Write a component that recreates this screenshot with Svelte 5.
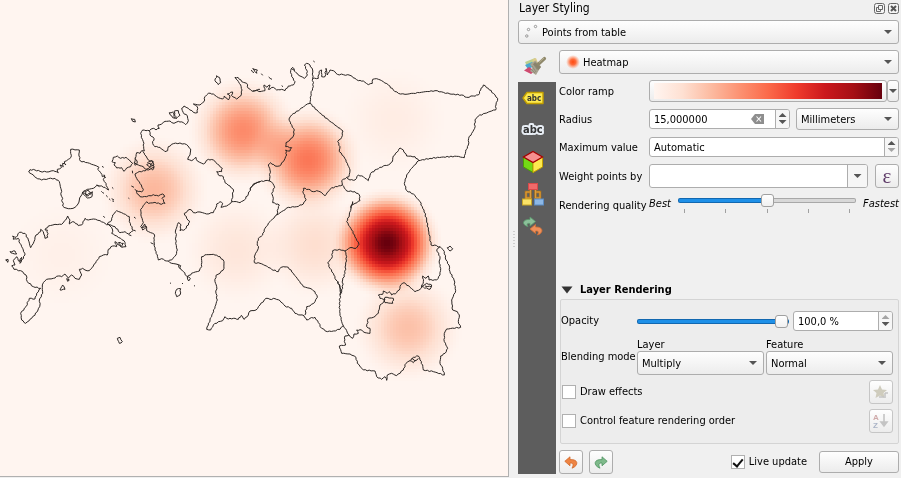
<script>
  const RAMP = [
    [255, 245, 240], [254, 224, 210], [252, 187, 161], [252, 146, 114], [251, 106, 74],
    [239, 59, 44], [203, 24, 29], [165, 15, 21], [103, 0, 13]
  ];
  const RADIUS = 57;
  const CELL = 3;
  const heat = [
    [387, 243, 1], [243, 131, 0.4], [308, 160, 0.46], [154, 190, 0.26], [408, 328, 0.23],
    [237, 250, 0.09], [315, 245, 0.13], [394, 120, 0.05], [62, 255, 0.03]
  ];

  function rampColor(v) {
    const t = Math.min(1, v) * 8;
    const i = Math.min(7, Math.floor(t));
    const c = RAMP[i].map((a, k) => Math.round(a + (RAMP[i + 1][k] - a) * (t - i)));
    return `rgb(${c.join(',')})`;
  }

  function drawHeat(canvas) {
    const ctx = canvas.getContext('2d');
    for (let y = 0; y < canvas.height; y += CELL) {
      for (let x = 0; x < canvas.width; x += CELL) {
        let sum = 0;
        for (const [px, py, w] of heat) {
          const q = ((x + 1.5 - px) ** 2 + (y + 1.5 - py) ** 2) / RADIUS ** 2;
          if (q < 1) sum += w * (1 - q) ** 2;
        }
        ctx.fillStyle = rampColor(sum);
        ctx.fillRect(x, y, CELL, CELL);
      }
    }
  }

  // Boundaries are digitised on four map sheets, three units to a pixel.
  const sheets = [
    { x: 0, y: 50, lines: [
      '212,298 238,300 237,318 241,333 262,338 275,343 290,348 297,352 293,358 302,368 307,380 314,377 310,388 318,400 322,412 326,420 315,412 300,408 290,406 280,415 262,418 248,426 243,438 238,450 234,462 225,472 212,476 198,474 188,468 190,460 185,452 188,445 183,435 185,425 181,410 178,395 165,385 145,386 125,390 108,383 95,372 86,366 90,359 105,360 120,364 140,366 160,362 175,368 172,358 185,352 180,345 190,350 188,340 198,345 193,335 205,328 213,322 212,310 z',
      '248,428 262,434 277,425 276,440 262,444 254,436 z', '254,424 264,420 274,432 260,438 z',
      '340,322 352,318 362,325 378,322 388,330 398,340 392,350 380,354 372,364 365,353 350,354 342,345 346,338 336,335 z',
      '394,206 404,208 406,216 398,214 z', '650,77 658,82 662,98 655,104 645,92 z',
      '508,188 518,186 526,205 518,203 510,194 z', '522,184 535,182 540,196 528,206 z',
      '448,242 438,242 428,240 422,250 424,262 430,275 431,290 433,303 425,302 420,310 410,308 406,325 404,338 415,345 430,350 438,358 450,352 458,360 462,348 450,345 460,335 445,330 438,318 428,305',
      '442,338 456,332 462,345 448,350 440,344 452,340', '404,325 412,336 406,346 403,336',
      '462,352 445,360 430,362 412,368 405,372 410,385 418,395 424,405 430,418 425,426 410,422 412,432 420,440 440,440 460,434 475,438 488,432 494,440 486,445 495,460 480,462 465,457 445,460 440,455 430,466 422,478',
      '448,242 450,255 462,265 458,280 465,290 480,292 495,305 503,302 505,290 520,281 540,279 560,284 572,297 570,315 563,328 575,332 588,322 592,333 610,342 625,328 640,330 652,342 667,355 665,365 650,365 655,375 670,380 675,398 690,408 700,418 698,435 695,455 710,455 720,458 733,450 745,432 755,410 770,397 780,395',
      '648,472 650,462 660,455 668,460 663,472 680,468 692,460 695,455',
      '448,242 460,235 468,240 478,235 474,225 485,222 495,214 510,213 522,220 535,214 550,218 557,224 565,212 562,198 550,188 545,175 552,168 565,175 580,187 592,188 592,170 580,162 600,165 612,155 615,140 625,130 640,132 655,143 668,147 673,138 685,150 690,138 682,132 698,126 694,136 710,147 722,138 726,120 722,105 712,90 705,82 714,82 718,88 730,97 740,100 745,115 758,124 780,118',
      '394,408 402,412', '404,418 410,422', '304,424 312,430', '318,436 323,441', '327,446 331,450', '337,453 342,454', '336,412 340,416', '306,349 311,352', '385,444 388,446', '397,362 398,370', '312,374 317,384', '290,405 298,410'
    ] },
    { x: 0, y: 200, lines: [
      '203,48 210,60 208,72 218,65 232,72 235,77 245,75 255,55 265,60 280,57 300,62 315,70 330,78 338,90 335,100 350,108 362,115 372,122 378,140 365,142 370,130 355,128 362,140 345,125 350,140 338,138 325,148 322,165 310,165 298,170 292,180 280,198 268,212 255,210 248,205 238,208 245,225 238,238 225,235 215,225 205,235 195,222 185,230 175,228 160,235 140,238 130,248 127,262 128,280 118,300 120,315 112,335 95,355 77,370 65,360 62,340 78,320 88,295 105,297 110,280 122,265 100,260 82,245 78,225 62,212 42,208 35,198 45,195 40,182 50,170 58,185 65,172 60,190 75,165 68,145 60,130 55,115 40,118 38,108 48,112 58,97 75,100 85,120 92,143 102,125 108,105 122,95 122,88 130,95 135,115 143,112 142,90 135,90 145,78 165,73 185,73 197,60 z',
      '350,32 365,38 388,50 388,65 400,92 385,102 375,95 360,98 345,80 322,72 335,60 338,45 z',
      '30,155 45,153 50,162 38,160 z', '17,180 24,178 23,187 z', '188,255 195,268 180,270 z', '200,236 208,240 203,244 z',
      '530,268 542,266 540,285 530,290 526,280 z', '352,415 360,412 367,425 358,430 z',
      '310,48 314,53', '402,51 407,55', '401,90 407,93', '386,104 394,107', '546,250 549,251', '582,257 585,258', '510,249 513,250', '335,-4 342,0',
      '422,28 424,50 430,68 422,80 428,90 440,82 434,72 426,82 438,78 440,92 452,98 463,103 462,125 465,150 472,165 475,180 485,176 495,182 505,183 515,190 528,192 542,197 541,207 550,215 560,228 571,236 566,243 562,230 580,218 598,213 605,200 605,170 620,164 640,163 660,170 672,185 672,205 660,220 648,226 645,245 650,260 648,280 652,300 645,320 638,340 630,360 625,375 620,388 632,390 640,375 655,365 668,362 675,350 685,357 700,355 715,358 724,346 733,358 745,345 750,333',
      '452,128 461,132', '532,192 540,206',
      '505,183 515,180 528,165 532,150 527,130 528,110 527,90 535,68 543,75 540,92 555,88 570,65 560,55 553,40 570,28 580,38 600,36 620,42 640,38 648,22'
    ] },
    { x: 250, y: 50, lines: [
      '8,123 20,120 30,125 45,122 42,105 50,112 60,105 55,118 70,112 80,120 95,118 105,122 115,108 130,105 135,95 125,80 122,62 128,52 138,68 150,78 163,85 172,75 170,60 163,45 170,40 180,45 188,60 188,85 205,85 207,65 215,60 215,80 225,80 228,55 232,75 240,60 250,62 262,73 280,74 300,76 315,85 325,92 340,93 355,104 367,100 368,88 380,86 395,92 415,105 430,120 445,130 465,133 490,130 520,126 555,122 580,127 600,132 635,135 650,142 670,138 685,135 692,120 700,105 715,115 730,130 743,145 738,165 737,180 725,183 705,190 685,198 675,210 674,235 665,250 656,265 655,285 647,305 643,323 620,319 580,321 540,325 506,332',
      '506,332 495,320 470,318 460,300 450,294 445,302 430,318 427,335 415,345 400,348 380,358 362,370 355,392 340,380 325,375 315,390 300,390 290,382',
      '188,85 190,110 183,130 180,160 172,162 150,178 125,195 117,207 122,222 133,240 130,258 120,270 108,278 107,290 125,293 120,303 107,300 110,315 100,335 88,348 75,348 62,338 55,345 60,360 60,380 58,393 68,400 74,412 65,430 70,445 68,458 88,465 85,475 80,495',
      '30,395 45,392 58,393', '0,418 10,402 30,395',
      '180,160 205,185 235,210 260,228 279,243 275,262 263,275 270,290 268,305 282,320 292,340 300,360 297,380 290,382 275,392 277,405 262,410 245,413 235,425 225,437 210,425 200,422 190,425 175,418 160,415 160,430 168,448 160,462 140,470 115,472 100,482 80,495',
      '277,405 290,423 315,425 328,435 330,452 315,460 303,468 303,475',
      '506,332 485,355 470,375 463,400 470,422 490,432 510,455 518,475 522,480',
      '8,56 22,60 20,70 14,64 z', '34,71 38,76', '56,81 66,88', '190,33 194,36', '95,107 99,110', '4,60 12,68', '124,54 132,60'
    ] },
    { x: 250, y: 200, lines: [
      '80,45 60,65 45,85 38,105 25,115 22,130 25,145 15,165 13,188 30,190 50,198 65,208 85,215 88,207 100,200 115,202 130,220 145,240 160,260 180,265 195,275 202,292 195,305 180,318 170,320 165,345',
      '0,333 18,330 30,315 48,295 60,298 75,296 90,302 105,318 125,325 135,340 150,345 162,347 170,360 180,355 195,352 205,368 215,385 232,395 250,393 270,388 280,377',
      '303,25 298,45 290,65 305,90 318,115 327,133 318,145 300,143 285,153 268,148 248,152 245,175 233,188 240,205 250,220 258,240 268,255 272,280 268,310 270,340 275,365 280,377 290,392 297,405',
      '285,153 290,170 287,195 285,220 278,240 278,265 270,285', '264,244 270,262 275,280',
      '297,405 308,415 312,402 325,400 320,390 335,390 345,398 360,400 360,385 350,380 355,355 370,352 385,340 390,315 400,308 405,298 390,295 385,285 398,283 400,273 412,280 417,275 425,285 440,278 450,265 452,255 462,248 480,262 495,275 510,268 515,260 520,245 518,228 528,235 535,228 537,240 560,240 570,225 572,205 568,190 570,170 560,150 570,140',
      '402,300 405,292 430,295 428,310 405,308 z', '514,260 530,250 545,255 540,268 z', '525,258 545,260',
      '297,405 285,408 283,425 287,435 268,438 275,460 300,462 318,472 322,490 340,510 375,513 380,530 395,538 405,530 410,541 412,525 425,520 440,527 460,510 468,490 480,482 490,472 505,468 510,480 518,495 520,510 550,515 583,525 578,505 570,490 572,468 585,460 593,445 583,425 583,400 590,387 632,382 625,365 628,345 622,335 608,330 605,300 617,272 612,240 600,215 597,195 588,180 583,155 575,145 560,137 543,135',
      '480,482 490,488 505,475', '484,476 498,482',
      '522,30 530,60 535,90 540,115 543,135', '303,25 308,5 303,18', '592,143 600,138 608,146 600,153 z'
    ] }
  ];

  // Adds a small wiggle between vertices so shores do not look ruled.
  function toPath(line) {
    const parts = line.split(' ');
    const closed = parts.at(-1) === 'z';
    const pts = parts.filter((p) => p !== 'z').map((p) => p.split(',').map(Number));
    if (closed) pts.push(pts[0]);
    let d = `M${pts[0]}`;
    for (let i = 1; i < pts.length; i++) {
      const [ax, ay] = pts[i - 1];
      const [bx, by] = pts[i];
      const len = Math.hypot(bx - ax, by - ay);
      const n = Math.max(1, Math.round(len / 6));
      for (let k = 1; k < n; k++) {
        const j = Math.sin((ax + by) * 12.9 + k * 78.2) * 1.5;
        const x = ax + ((bx - ax) * k) / n - ((by - ay) / len) * j;
        const y = ay + ((by - ay) * k) / n + ((bx - ax) / len) * j;
        d += `L${x.toFixed(1)},${y.toFixed(1)}`;
      }
      d += `L${bx},${by}`;
    }
    return d;
  }

  let radius = $state('15,000000');
  let maximum = $state('Automatic');
  let weight = $state('');
  let quality = $state(50);
  let opacity = $state(100);
  let opacityText = $state('100,0 %');
  let live = $state(true);
</script>

{#snippet steps(name, upOff, downOff)}
  <span class="steps">
    <button aria-label="Increase {name}" disabled={upOff}><i class="up"></i></button>
    <button aria-label="Decrease {name}" disabled={downOff}><i class="down"></i></button>
  </span>
{/snippet}

<div class="app">
  <main class="map">
    <canvas width="508" height="476" use:drawHeat></canvas>
    <svg viewBox="0 0 508 476" role="img" aria-label="Heatmap over county boundaries">
      {#each sheets as s}
        <g transform="translate({s.x} {s.y}) scale(0.33333)">
          {#each s.lines as l}<path d={toPath(l)} />{/each}
        </g>
      {/each}
    </svg>
  </main>

  <div class="grip"><svg width="2" height="16" aria-hidden="true"><path d="M1 0V16" stroke="#aaa" stroke-dasharray="1 2" /></svg></div>

  <aside class="panel">
    <header>
      <h1>Layer Styling</h1>
      <button class="win" aria-label="Float panel">
        <svg width="11" height="11" viewBox="0 0 11 11"><rect x=".5" y=".5" width="10" height="10" rx="2" fill="#f4f4f4" stroke="#666" /><path d="M4.500 2.500H8.500V6.500H4.500ZM4.500 4.500H2.500V8.500H6.500V6.500" fill="none" stroke="#666" /></svg>
      </button>
      <button class="win" aria-label="Close panel">
        <svg width="11" height="11" viewBox="0 0 11 11"><rect x=".5" y=".5" width="10" height="10" rx="2" fill="#f4f4f4" stroke="#666" /><path d="M3 3L8 8M8 3L3 8" stroke="#555" stroke-width="2" /></svg>
      </button>
    </header>

    <div class="combo layer">
      <svg class="lead" width="14" height="14" viewBox="0 0 14 14" aria-hidden="true"><g fill="#fff" stroke="#8a8a8a" stroke-width=".9"><circle cx="3.500" cy="5.500" r="1.200" /><circle cx="10.500" cy="2.500" r="1.200" /><circle cx="1.800" cy="12" r="1.200" /></g></svg>
      <select aria-label="Layer"><option>Points from table</option></select>
    </div>

    <div class="body">
      <nav>
        <button class="tab current" aria-label="Symbology">
          <svg width="24" height="20" viewBox="0 0 24 20"><path d="M2 6L12 2L15 9L5 12Z" fill="#bccf8e" /><path d="M2 9L9 6L12 10L5 13Z" fill="#4aa8d0" /><path d="M9 3.500L13 2L15 7L11 8Z" fill="#dccb8a" /><path d="M1 14.500L6 11L12 15L8 18Z" fill="#cf4a70" /><path d="M7 8L12.500 4.500L18 10.500L13 19L7 15L9.500 12Z" fill="#a8a391" /><path d="M12 6L18 11L15.500 14L10 8.500Z" fill="#89836c" /><path d="M15.500 8L21.500 2.500" stroke="#8f886b" stroke-width="3.200" stroke-linecap="round" /><path d="M16 6.500L21 2" stroke="#b8b18f" stroke-width="1" /><path d="M9 10L13 16M11.500 9.500L14.500 14M8 13L12 17" stroke="#8b8672" stroke-width=".8" /></svg>
        </button>
        <button class="tab" aria-label="Labels">
          <svg width="22" height="14" viewBox="0 0 22 14"><path d="M1 7L5 1.500H21V12.500H5Z" fill="#fce94f" stroke="#c4a000" stroke-width="1.400" stroke-linejoin="round" /><text x="5" y="10" class="tag">abc</text></svg>
        </button>
        <button class="tab" aria-label="Masks">
          <svg width="24" height="18" viewBox="0 0 24 18"><text x="2" y="12" class="mask">abc</text></svg>
        </button>
        <button class="tab" aria-label="3D view">
          <svg width="22" height="24" viewBox="0 0 22 24"><path d="M1.500 7L11 12.500V22.500L1.500 17Z" fill="#73d916" stroke="#4e9a06" /><path d="M20.500 7L11 12.500V22.500L20.500 17Z" fill="#fce94f" stroke="#c4a000" /><path d="M11 1.500L20.500 7L11 12.500L1.500 7Z" fill="#f58f8f" stroke="#a40000" stroke-width="1.300" /></svg>
        </button>
        <button class="tab" aria-label="Diagrams">
          <svg width="24" height="24" viewBox="0 0 24 24"><path d="M9.500 7V16H5M14.500 7V16H19M5 18V10H9.500M19 18V10H14.500" fill="none" stroke="#b87a1a" stroke-width="2.400" /><path d="M9.500 7V16H5M14.500 7V16H19M5 18V10H9.500M19 18V10H14.500" fill="none" stroke="#e3a548" stroke-width=".8" /><rect x="7.500" y="1.500" width="9" height="6" fill="#f06a6a" stroke="#d84a4a" /><rect x="1.500" y="17" width="9" height="6" fill="#fbe368" stroke="#c9a727" /><rect x="13.500" y="17" width="9" height="6" fill="#8db8e6" stroke="#5b8cc4" /></svg>
        </button>
        <button class="tab" aria-label="History">
          <svg width="22" height="20" viewBox="0 0 22 20"><path d="M8 1L13.500 5.500L8 10V7.500C5 7 4.500 8 6 10.500C-.5 9 0 3 8 3.500Z" fill="#8cc09a" stroke="#5a9a6c" stroke-width=".8" /><path d="M13.500 8.500L8 13L13.500 17.500V15C16.500 14.800 17 16 15.500 19C22 17 21.500 10.500 13.500 11Z" fill="#ee8f5a" stroke="#d07035" stroke-width=".8" /></svg>
        </button>
      </nav>

      <section class="content">
        <div class="combo">
          <svg class="lead" width="16" height="16" viewBox="0 0 16 16" aria-hidden="true"><defs><radialGradient id="glow"><stop offset="0" stop-color="#ff4a10" /><stop offset=".4" stop-color="#ff6b3a" /><stop offset="1" stop-color="#ff8a60" stop-opacity="0" /></radialGradient></defs><circle cx="7" cy="8" r="7" fill="url(#glow)" /></svg>
          <select aria-label="Renderer"><option>Heatmap</option></select>
        </div>

        <div class="row ramp-row">
          <span class="label">Color ramp</span>
          <button class="ramp" aria-label="Edit color ramp"><span style="background: linear-gradient(90deg, {RAMP.map((c) => `rgb(${c})`).join(', ')})"></span></button>
          <button class="ramp-more" aria-label="Choose color ramp"><i class="down"></i></button>
        </div>

        <div class="row">
          <label for="radius">Radius</label>
          <span class="spin radius">
            <input id="radius" bind:value={radius} />
            <button class="clear" aria-label="Clear radius" onclick={() => (radius = '')}>
              <svg width="13" height="10" viewBox="0 0 13 10"><path d="M4 0H13V10H4L0 5Z" fill="#8e8e8e" /><path d="M5.500 2.500L10 7.500M10 2.500L5.500 7.500" stroke="#fff" stroke-width="1.100" /></svg>
            </button>
            {@render steps('radius', false, false)}
          </span>
          <div class="combo unit"><select aria-label="Radius unit"><option>Millimeters</option></select></div>
        </div>

        <div class="row max-row">
          <label for="maximum">Maximum value</label>
          <span class="spin">
            <input id="maximum" bind:value={maximum} />
            {@render steps('maximum', false, true)}
          </span>
        </div>

        <div class="row weight-row">
          <label for="weight">Weight points by</label>
          <span class="spin tall">
            <input id="weight" bind:value={weight} />
            <button class="drop" aria-label="Choose field"><i class="down"></i></button>
          </span>
          <button class="tool expr" aria-label="Expression">ε</button>
        </div>

        <div class="row quality-row">
          <label for="quality">Rendering quality</label>
          <em>Best</em>
          <div class="ticked">
            <input id="quality" type="range" bind:value={quality} style="--fill: {quality}%" />
            <div class="ticks"><i></i><i></i><i></i><i></i><i></i></div>
          </div>
          <em class="fast">Fastest</em>
        </div>

        <details open>
          <summary><svg width="12" height="8" viewBox="0 0 12 8" aria-hidden="true"><path d="M.5 .5H11.500L6 7.500Z" fill="#333" /></svg>Layer Rendering</summary>
          <div class="group">
            <div class="grow opacity">
              <label for="opacity">Opacity</label>
              <input id="opacity" type="range" bind:value={opacity} style="--fill: {opacity}%" />
              <span class="spin">
                <input aria-label="Opacity percent" bind:value={opacityText} />
                {@render steps('opacity', true, false)}
              </span>
            </div>
            <div class="grow blend">
              <span class="label">Blending mode</span>
              <div class="mode">
                <label for="blend-layer">Layer</label>
                <div class="combo"><select id="blend-layer"><option>Multiply</option></select></div>
              </div>
              <div class="mode">
                <label for="blend-feature">Feature</label>
                <div class="combo"><select id="blend-feature"><option>Normal</option></select></div>
              </div>
            </div>
            <div class="grow check">
              <label><input type="checkbox" />Draw effects</label>
              <button class="tool" disabled aria-label="Customize effects">
                <svg width="16" height="16" viewBox="0 0 16 16"><path d="M7 1L9 5.500L14 6L10.500 9L11.500 14L7 11.500L2.500 14L3.500 9L0 6L5 5.500Z" fill="#cfccbd" /><path d="M6 13h5M12 9v5M12 9h3" stroke="#c3c3c3" stroke-width="1.500" /></svg>
              </button>
            </div>
            <div class="grow check">
              <label><input type="checkbox" />Control feature rendering order</label>
              <button class="tool" disabled aria-label="Define order">
                <svg width="16" height="16" viewBox="0 0 16 16"><text x="0" y="7" class="az" fill="#cfa9a9">A</text><text x="0" y="15" class="az" fill="#a9b3c6">Z</text><path d="M11 1V12M8 9L11 13L14 9Z" fill="#c4c4c4" stroke="#c4c4c4" stroke-width="1.600" /></svg>
              </button>
            </div>
          </div>
        </details>

        <footer>
          <button class="tool" aria-label="Undo">
            <svg width="14" height="13" viewBox="0 0 14 13"><path d="M6 .8L.8 5.300L6 9.800V7C9 6.600 10 8.500 8 12.200C15 9.500 14.500 3 6 3.600Z" fill="#ee8443" stroke="#d2692c" stroke-width=".8" /></svg>
          </button>
          <button class="tool" aria-label="Redo">
            <svg width="14" height="13" viewBox="0 0 14 13"><path d="M8 .8L13.200 5.300L8 9.800V7C5 6.600 4 8.500 6 12.200C-1 9.500 -.5 3 8 3.600Z" fill="#7fba8b" stroke="#4f9462" stroke-width=".8" /></svg>
          </button>
          <label class="live"><input type="checkbox" bind:checked={live} />Live update</label>
          <button class="apply">Apply</button>
        </footer>
      </section>
    </div>
  </aside>
</div>

<style>
  :global(body) { margin: 0; background: #f0f0f0; }
  .app { display: flex; min-height: 100vh; color: #000; font: 11px/14px "DejaVu Sans Condensed", "DejaVu Sans", sans-serif; }
  .app * { box-sizing: border-box; }
  button, input, select { font: inherit; color: inherit; margin: 0; }
  button { padding: 0; border: 0; background: none; }
  svg { display: block; }

  .map { flex: 1; min-width: 0; align-self: flex-start; display: grid; background: #fff5f0; border-right: 1px solid #b0b0b0; border-bottom: 1px solid #b0b0b0; }
  .map > * { grid-area: 1 / 1; display: block; width: 100%; }
  .map path { fill: none; stroke: #2a2523; stroke-width: 3; stroke-linejoin: round; }

  .grip { width: 9px; display: flex; align-items: center; justify-content: center; }
  .panel { width: 383px; padding-right: 2px; display: flex; flex-direction: column; }
  header { display: flex; align-items: center; gap: 3px; height: 16px; margin-bottom: 4px; }
  h1 { flex: 1; margin: 0 1px; font: inherit; font-size: 12px; }

  .combo { position: relative; height: 24px; }
  .combo select { width: 100%; height: 100%; appearance: none; border: 1px solid #adadad; border-radius: 3px; background: linear-gradient(#fefefe, #ececec); padding: 2px 20px 0 4px; }
  .combo::after { content: ""; position: absolute; right: 7px; top: 10px; border: 4px solid transparent; border-top-color: #555; border-bottom: 0; }
  .lead { position: absolute; left: 7px; top: 4px; }
  .lead + select { padding-left: 23px; }
  .layer { margin-bottom: 6px; }

  .body { flex: 1; display: flex; gap: 3px; }
  nav { width: 38px; margin-bottom: 4px; background: #5d5d5d; display: flex; flex-direction: column; }
  .tab { height: 32px; display: flex; align-items: center; justify-content: center; padding-right: 8px; }
  .current { background: #f0f0f0; padding-right: 4px; }
  .tag { font: bold 8px "DejaVu Sans Condensed", sans-serif; fill: #333; }
  .mask { font: bold 11px "DejaVu Sans Condensed", sans-serif; fill: #333; stroke: #e8eef5; stroke-width: 4; paint-order: stroke; stroke-linejoin: round; }
  .az { font: bold 8px "Liberation Sans", sans-serif; }

  .content { flex: 1; min-width: 0; display: flex; flex-direction: column; }
  .row { display: flex; align-items: center; margin-top: 6px; }
  .row > :first-child { width: 90px; flex: none; padding-top: 1px; }
  .ramp-row { height: 22px; }
  .ramp { flex: 1; height: 22px; padding: 2px 4px; border: 1px solid #adadad; border-radius: 3px; background: linear-gradient(#fefefe, #ececec); }
  .ramp span { display: block; height: 16px; }
  .ramp-more { width: 12px; height: 22px; border: 1px solid #adadad; border-radius: 3px; background: linear-gradient(#fefefe, #ececec); display: grid; place-items: center; }
  .max-row, .weight-row { margin-top: 7px; }

  .up, .down { display: block; width: 8px; height: 4px; background: #555; clip-path: polygon(0 0, 100% 0, 50% 100%); }
  .up { clip-path: polygon(50% 0, 100% 100%, 0 100%); }
  .spin { flex: 1; min-width: 0; height: 20px; display: flex; align-items: stretch; border: 1px solid #adadad; border-radius: 3px; background: #fff; overflow: hidden; }
  .spin input { flex: 1; min-width: 0; width: 0; border: 0; padding: 2px 4px 0; background: none; outline: none; }
  .steps { width: 14px; border-left: 1px solid #adadad; background: #f6f6f6; display: flex; flex-direction: column; justify-content: center; gap: 2px; }
  .steps button { display: flex; justify-content: center; height: 5px; }
  .steps button:disabled { opacity: .5; }
  .clear { padding-right: 11px; display: flex; align-items: center; }
  .radius { flex: none; width: 141px; margin-right: 6px; }
  .unit { flex: 1; height: 22px; }
  .unit::after { top: 9px; }
  .tall { height: 24px; margin-right: 7px; }
  .drop { width: 20px; border-left: 1px solid #adadad; background: #f6f6f6; display: grid; place-items: center; }
  .tool { width: 24px; height: 24px; flex: none; border: 1px solid #adadad; border-radius: 3px; background: linear-gradient(#fefefe, #ececec); display: grid; place-items: center; }
  .tool:disabled { border-color: #c6c6c6; }
  .expr { font: 21px/18px "Liberation Serif", serif; color: #5e3a68; }

  .quality-row { align-items: flex-start; height: 26px; margin-top: 5px; }
  .quality-row > label:first-child { padding-top: 6px; }
  .quality-row em { width: 29px; padding-top: 4px; }
  .quality-row .fast { width: 38px; text-align: right; }
  .ticked { flex: 1; margin-right: 5px; }
  .ticks { display: flex; justify-content: space-between; padding: 2px 6px 0; }
  .ticks i { width: 1px; height: 4px; background: #a0a0a0; }
  input[type="range"] { display: block; width: 100%; height: 14px; appearance: none; background: none; }
  input[type="range"]::-webkit-slider-runnable-track { height: 5px; border: 1px solid #0000; border-radius: 2px; background: linear-gradient(90deg, #1e90e8 var(--fill), #d8d8d8 var(--fill)) padding-box, linear-gradient(90deg, #1268b0 var(--fill), #a8a8a8 var(--fill)) border-box; }
  input[type="range"]::-webkit-slider-thumb { appearance: none; width: 13px; height: 13px; margin-top: -5px; border: 1px solid #a0a0a0; border-radius: 3px; background: linear-gradient(#fff, #f0f0f0); }

  details { margin-top: 62px; }
  summary { display: flex; align-items: center; gap: 7px; padding-left: 2px; height: 18px; font-weight: bold; list-style: none; }
  .group { margin-left: 1px; padding: 11px 5px 10px 0; border: 1px solid #d4d4d4; border-radius: 2px; background: #ededed; }
  .grow { display: flex; align-items: center; }
  .grow > :first-child { width: 76px; flex: none; }
  .opacity input[type="range"] { flex: 1; min-width: 0; width: 0; }
  .opacity .spin { flex: none; width: 100px; margin-left: 4px; }
  .blend { margin-top: 7px; gap: 2px; }
  .blend > :first-child { width: 74px; white-space: nowrap; }
  .mode { flex: 1; }
  .mode label { display: block; height: 13px; line-height: 13px; }
  .check { justify-content: space-between; margin-top: 5px; }
  .grow.check > label { width: auto; padding-left: 1px; }
  .check label, .live { display: flex; align-items: center; gap: 4px; }
  input[type="checkbox"] { width: 14px; height: 14px; appearance: none; border: 1px solid #b0b0b0; background: #fff; display: grid; place-items: center; }
  input[type="checkbox"]:checked::before { content: ""; width: 4px; height: 8px; border: solid #111; border-width: 0 2px 2px 0; transform: rotate(40deg); }

  footer { display: flex; align-items: center; gap: 6px; margin-top: 6px; }
  .live { margin-left: auto; }
  .apply { width: 80px; height: 22px; margin-left: 6px; border: 1px solid #adadad; border-radius: 3px; background: linear-gradient(#fefefe, #ececec); }
</style>
